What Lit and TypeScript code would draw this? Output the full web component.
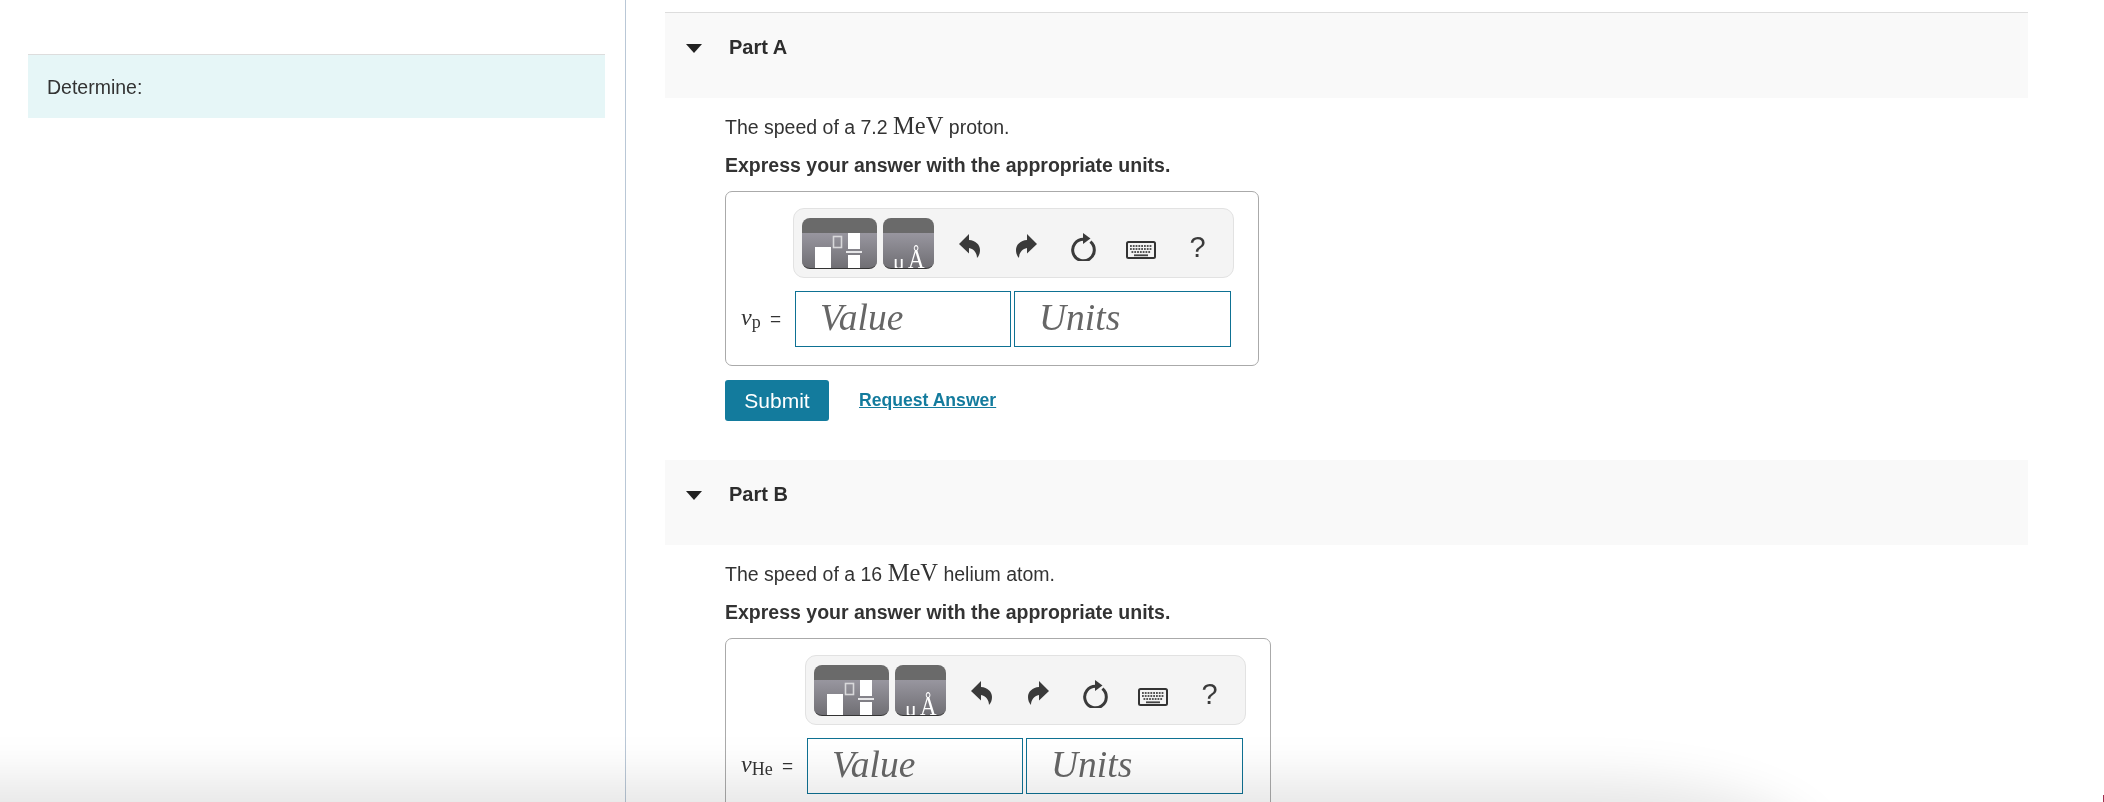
import { LitElement, html, css } from "lit";
import { customElement } from "lit/decorators.js";

const undo = html`<svg class="ic" width="21" height="24" viewBox="0 0 21 24"><path d="M0 10 L10 0 L10 6 C16.5 6.5 21 10.5 21 16 C21 19 20 22 18 24 C18 19 15 15 10 14 L10 19.5 Z" fill="#3a3a3a"/></svg>`;
const redo = html`<svg class="ic" width="21" height="24" viewBox="0 0 21 24"><path d="M21 10 L11 0 L11 6 C4.500 6.500 0 10.500 0 16 C0 19 1 22 3 24 C3 19 6 15 11 14 L11 19.500 Z" fill="#3a3a3a"/></svg>`;
const reset = html`<svg class="ic" width="25" height="28" viewBox="0 0 25 28"><path d="M19.400 8.700 A10.800 10.800 0 1 1 12.500 6.200" fill="none" stroke="#3a3a3a" stroke-width="3"/><path d="M12 0 L19.500 5.500 L12 11 Z" fill="#3a3a3a"/></svg>`;
const keyboard = html`<svg class="ic" width="30" height="18" viewBox="0 0 30 18"><rect x="1" y="1" width="28" height="16" rx="1.500" fill="#f4f4f4" stroke="#333" stroke-width="2"/><path d="M4 5h22M4 8h22M5.500 11h19" stroke="#555" stroke-width="1.800" stroke-dasharray="1.800 1" fill="none"/><path d="M8 14.300h14" stroke="#444" stroke-width="1.800" fill="none"/></svg>`;
const templates = html`<svg class="glyph" width="75" height="51" viewBox="0 0 75 51"><rect x="13" y="29" width="16" height="22" fill="#fff"/><rect x="31.500" y="18.500" width="8" height="11" fill="none" stroke="#d8d8da" stroke-width="1.600"/><rect x="46" y="15" width="12" height="16" fill="#fff"/><rect x="44" y="33" width="16" height="2" fill="#e6e6e8"/><rect x="46" y="37" width="12" height="14" fill="#fff"/></svg>`;

@customElement("answer-box")
class AnswerBox extends LitElement {
  static properties = { sym: {}, sub: {} };
  sym = "v";
  sub = "p";
  static styles = css`
    :host { display: block; width: fit-content; }
    .box { display: grid; grid-template-columns: auto auto; column-gap: 14px; row-gap: 13px; padding: 16px 27px 18px 15px; border: 1px solid #aaa; border-radius: 7px; background: #fff; align-items: center; }
    .toolbar { grid-column: 2; display: flex; align-items: center; height: 70px; box-sizing: border-box; margin: 0 -3px 0 -2px; padding: 0 0 0 8px; background: #f4f4f4; border: 1px solid #e2e2e2; border-radius: 11px; }
    .btn { position: relative; flex: none; height: 51px; border-radius: 8px; overflow: hidden; box-sizing: border-box; border-bottom: 1px solid #333; background: linear-gradient(#6a6a6a 0 15px, #98969f 15px, #706f74 100%); }
    .btn1 { width: 75px; margin-right: 6px; }
    .btn2 { width: 51px; margin-right: 7px; }
    .glyph { display: block; }
    .mu { position: absolute; left: 10px; bottom: -2px; font: 22px/16px "Liberation Serif", serif; color: #fff; }
    .ang { position: absolute; left: 25px; bottom: 1px; font: 27px/16px "Liberation Serif", serif; color: #fff; transform: scaleX(.85); transform-origin: left bottom; }
    .tool { flex: none; width: 57px; display: flex; justify-content: center; align-items: center; margin-top: 6px; }
    .tool.rs { margin-top: 8px; }
    .tool.kb { margin-top: 14px; }
    .tool.qm { margin-top: 8px; }
    .q { font: 29px/32px "Liberation Sans", Arial, sans-serif; color: #3a3a3a; }
    .label { font: 19px "Liberation Sans", Arial, sans-serif; color: #333; white-space: nowrap; margin-top: -3px; }
    .label i { font: italic 24px "Liberation Serif", serif; }
    .label sub { font: 18px "Liberation Serif", serif; vertical-align: -3px; line-height: 0; margin-right: 4px; }
    .inputs { display: flex; gap: 3px; }
    .input { width: 216px; height: 56px; box-sizing: border-box; border: 1px solid #0e7193; padding-left: 24px; font: italic 37.5px/52px "Liberation Serif", serif; color: #666; background: transparent; }
    .input + .input { width: 217px; }
  `;
  render() {
    return html`<div class="box">
      <div class="toolbar">
        <div class="btn btn1">${templates}</div>
        <div class="btn btn2"><span class="mu">μ</span><span class="ang">Å</span></div>
        <div class="tool">${undo}</div>
        <div class="tool">${redo}</div>
        <div class="tool rs">${reset}</div>
        <div class="tool kb">${keyboard}</div>
        <div class="tool qm"><span class="q">?</span></div>
      </div>
      <div class="label"><i>${this.sym}</i><sub>${this.sub}</sub> =</div>
      <div class="inputs"><div class="input">Value</div><div class="input">Units</div></div>
    </div>`;
  }
}

@customElement("app-root")
class AppRoot extends LitElement {
  static styles = css`
    :host { display: block; position: relative; height: 802px; overflow: hidden; background: #fff; font-family: "Liberation Sans", Arial, sans-serif; color: #333; }
    .page { display: flex; height: 100%; }
    .left { width: 625px; box-sizing: content-box; border-right: 1px solid #b9c7d6; padding-top: 54px; flex: none; }
    .note { margin: 0 20px 0 28px; height: 64px; box-sizing: border-box; border-top: 1px solid #ddd; background: #e6f6f7; padding: 2px 0 0 19px; display: flex; align-items: center; font-size: 19.5px; }
    .right { flex: none; width: 1363px; margin-left: 39px; padding-top: 12px; }
    .head { height: 85px; box-sizing: content-box; background: #f9f9f9; display: flex; align-items: flex-start; padding: 0 0 0 21px; font-weight: 700; font-size: 20px; line-height: 26px; color: #2d2d2d; gap: 27px; }
    .head > span:last-child { margin-top: 20.500px; }
    .head.first { border-top: 1px solid #ddd; }
    .tri { width: 0; height: 0; margin-top: 31px; border-left: 8.500px solid transparent; border-right: 8.500px solid transparent; border-top: 9px solid #222; }
    .body { padding: 17px 0 39px 60px; }
    p { margin: 0; font-size: 19.5px; line-height: 24px; }
    .m { font: 24.5px/0 "Liberation Serif", serif; }
    .ex { font-weight: 700; margin: 14px 0 14px; }
    .actions { display: flex; align-items: center; gap: 30px; margin-top: 14px; }
    .submit { width: 104px; height: 41px; background: #137b9d; color: #fff; border-radius: 3px; font-size: 21px; display: flex; align-items: center; justify-content: center; }
    .ra { font-size: 17.6px; font-weight: 700; color: #137b9d; text-decoration: underline; }
    .fade { position: absolute; left: 0; right: 0; bottom: 0; height: 70px; overflow: hidden; pointer-events: none; mix-blend-mode: multiply; }
    .fade div { position: absolute; left: -200px; width: 1990px; top: 72px; height: 100px; border-radius: 0 200px 0 0 / 0 50px 0 0; background: #e6e6e6; box-shadow: 0 0 50px 24px #e6e6e6; }
    .pin { position: absolute; right: 0; bottom: 0; width: 1px; height: 7px; background: #a03050; }
  `;
  part(name: string, text: unknown, sym: string, sub: string, first: boolean) {
    return html`<div class="head ${first ? "first" : ""}"><span class="tri"></span><span>${name}</span></div>
      <div class="body">
        <p>${text}</p>
        <p class="ex">Express your answer with the appropriate units.</p>
        <answer-box .sym=${sym} .sub=${sub}></answer-box>
        ${first ? html`<div class="actions"><div class="submit">Submit</div><span class="ra">Request Answer</span></div>` : ""}
      </div>`;
  }
  render() {
    return html`<div class="page">
        <div class="left"><div class="note">Determine:</div></div>
        <div class="right">
          ${this.part("Part A", html`The speed of a 7.2 <span class="m">MeV</span> proton.`, "v", "p", true)}
          ${this.part("Part B", html`The speed of a 16 <span class="m">MeV</span> helium atom.`, "v", "He", false)}
        </div>
      </div>
      <div class="fade"><div></div></div>
      <div class="pin"></div>`;
  }
}
